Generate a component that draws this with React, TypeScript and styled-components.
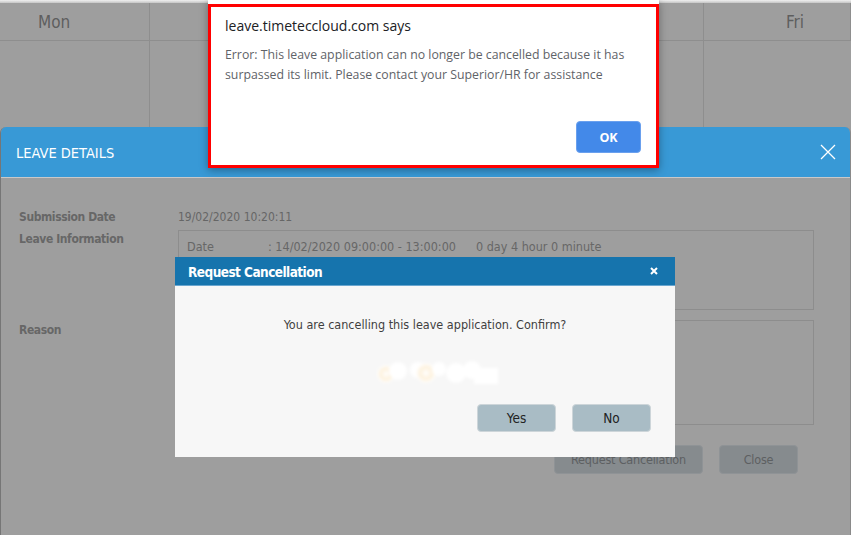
import React from "react";
import styled, { createGlobalStyle } from "styled-components";

const Global = createGlobalStyle`
  html, body { margin: 0; padding: 0; }
  body { background: #9e9e9e; font-family: "DejaVu Sans Condensed", "DejaVu Sans", sans-serif; }
`;

const Page = styled.div`
  position: relative;
  width: 851px;
  height: 535px;
  overflow: hidden;
  background: #9e9e9e;
`;

const TopStrip = styled.div`
  height: 3px;
  background: linear-gradient(#f0f0f0, #c4c4c4);
`;

const Calendar = styled.div`
  display: grid;
  grid-template-columns: 150px 185px 185px 184px 1fr;
  grid-template-rows: 38px 90px;
`;

const DayHead = styled.div<{ $pad: number }>`
  border-right: 1px solid #8e8e8e;
  border-bottom: 1px solid #8e8e8e;
  padding-left: ${(p) => p.$pad}px;
  padding-top: 1px;
  display: flex;
  align-items: center;
  font-size: 17px;
  color: #5e5e5e;
  &:last-child { border-right: none; }
`;

const DayCell = styled.div`
  border-right: 1px solid #8e8e8e;
  &:last-child { border-right: none; }
`;

const Modal = styled.div`
  position: absolute;
  left: 0;
  top: 127px;
  width: 849px;
  height: 420px;
  border-radius: 6px 6px 0 0;
  border-left: 1px solid #767676;
  border-right: 1px solid #8a8a8a;
  background: #9e9e9e;
  overflow: hidden;
  display: flex;
  flex-direction: column;
`;

const ModalHeader = styled.div`
  height: 50px;
  background: #3899d6;
  border-bottom: 1px solid #c9c9c9;
  display: flex;
  align-items: center;
  justify-content: space-between;
  padding: 0 14px 0 15px;
`;

const ModalTitle = styled.div`
  font-size: 14.5px;
  color: #ffffff;
  padding-top: 2px;
`;

const ModalBody = styled.div`
  padding: 30px 36px 0 18px;
  display: grid;
  grid-template-columns: 159px 1fr;
  color: #666;
  font-size: 12px;
`;

const Label = styled.div<{ $mt?: number }>`
  font-weight: bold;
  font-size: 12px;
  letter-spacing: -0.4px;
  color: #676767;
  margin-top: ${(p) => p.$mt ?? 0}px;
  line-height: 18px;
`;

const Value = styled.div`
  color: #666;
  line-height: 18px;
`;

const InfoBox = styled.div<{ $h: number; $mt?: number }>`
  border: 1px solid #8d8d8d;
  height: ${(p) => p.$h}px;
  margin-top: ${(p) => p.$mt ?? 0}px;
  padding: 8px 8px;
  box-sizing: border-box;
  display: flex;
  font-size: 12.5px;
  color: #676767;
`;

const InfoKey = styled.span`width: 81px;`;
const InfoVal = styled.span`width: 208px;`;

const Footer = styled.div`
  display: flex;
  justify-content: flex-end;
  gap: 16px;
  padding: 20px 52px 0 0;
`;

const GhostButton = styled.div<{ $w: number }>`
  width: ${(p) => p.$w}px;
  height: 29px;
  border-radius: 4px;
  background: #868b8e;
  border: 1px solid #8f9396;
  color: #5d6062;
  font-size: 12.5px;
  letter-spacing: -0.2px;
  display: flex;
  align-items: center;
  justify-content: center;
  box-sizing: border-box;
`;

const Dialog = styled.div`
  position: absolute;
  left: 175px;
  top: 257px;
  width: 500px;
  height: 200px;
  background: #f7f7f7;
  display: flex;
  flex-direction: column;
`;

const DialogHeader = styled.div`
  height: 28px;
  background: #1674ad;
  border-bottom: 1px solid #6aa6cf;
  display: flex;
  align-items: center;
  justify-content: space-between;
  padding: 0 17px 0 13px;
`;

const DialogTitle = styled.div`
  font-weight: bold;
  color: #fff;
  font-size: 13.5px;
  letter-spacing: -0.55px;
  padding-top: 2px;
`;

const DialogBody = styled.div`
  flex: 1;
  display: flex;
  flex-direction: column;
  align-items: center;
`;

const Message = styled.div`
  margin-top: 31px;
  font-size: 12.5px;
  color: #3f3f3f;
  line-height: 16px;
`;

const Loader = styled.div`
  margin-top: 24px;
  margin-left: 25px;
  height: 30px;
  width: 124px;
`;

const DialogActions = styled.div`
  align-self: stretch;
  display: flex;
  justify-content: flex-end;
  gap: 16px;
  padding: 17px 24px 0 0;
`;

const DialogButton = styled.div`
  width: 79px;
  height: 28px;
  box-sizing: border-box;
  border-radius: 4px;
  background: #a9bcc5;
  border: 1px solid #cdd5d9;
  color: #222;
  font-size: 13.5px;
  display: flex;
  align-items: center;
  justify-content: center;
`;

const Alert = styled.div`
  position: absolute;
  left: 208px;
  top: 0;
  width: 451px;
  height: 168px;
  background: #fff;
  box-shadow: 0 2px 8px rgba(0, 0, 0, 0.35);
  padding-top: 4px;
  box-sizing: border-box;
  display: flex;
`;

const AlertFrame = styled.div`
  flex: 1;
  border: 3px solid #ff0000;
  padding: 9px 14px 0 14px;
  display: flex;
  flex-direction: column;
`;

const AlertTitle = styled.div`
  font-family: "Open Sans", "Noto Sans", sans-serif;
  font-size: 14px;
  color: #202124;
  line-height: 20px;
`;

const AlertText = styled.div`
  margin-top: 9px;
  font-family: "Open Sans", "Noto Sans", sans-serif;
  font-size: 12.3px;
  line-height: 20px;
  color: #5f6368;
`;

const AlertActions = styled.div`
  margin-top: auto;
  margin-bottom: 12px;
  display: flex;
  justify-content: flex-end;
  padding-right: 1px;
`;

const OkButton = styled.div`
  width: 65px;
  height: 32px;
  border-radius: 4px;
  background: #4389e9;
  border: 1px solid #6aa0ee;
  box-sizing: border-box;
  color: #fff;
  font-family: "Open Sans", "Noto Sans", sans-serif;
  font-weight: bold;
  font-size: 12.5px;
  display: flex;
  align-items: center;
  justify-content: center;
`;

const CloseX = () => (
  <svg width="16" height="16" viewBox="0 0 16 16">
    <path d="M1 1 L15 15 M15 1 L1 15" stroke="#fff" strokeWidth="1.3" fill="none" />
  </svg>
);

const SmallX = () => (
  <svg width="8" height="8" viewBox="0 0 8 8">
    <path d="M1 1 L7 7 M7 1 L1 7" stroke="#fff" strokeWidth="2" fill="none" />
  </svg>
);

const LoaderArt = () => (
  <svg width="124" height="30" viewBox="0 0 124 30">
    <defs>
      <filter id="blur" x="-20%" y="-40%" width="140%" height="180%">
        <feGaussianBlur stdDeviation="1.6" />
      </filter>
      <radialGradient id="warm" cx="0.5" cy="0.5" r="0.5">
        <stop offset="0" stopColor="#ffffff" />
        <stop offset="0.6" stopColor="#fdf1dc" />
        <stop offset="1" stopColor="#ffffff" />
      </radialGradient>
    </defs>
    <g filter="url(#blur)" fill="#ffffff">
      <circle cx="10" cy="17" r="9" fill="url(#warm)" />
      <circle cx="22" cy="14" r="9" />
      <circle cx="42" cy="13" r="8" />
      <circle cx="50" cy="16" r="10" fill="url(#warm)" />
      <circle cx="63" cy="12" r="7" />
      <circle cx="80" cy="16" r="10" />
      <circle cx="96" cy="13" r="9" />
      <rect x="98" y="11" width="24" height="16" />
    </g>
  </svg>
);

export default function App() {
  return (
    <Page>
      <Global />
      <TopStrip />
      <Calendar>
        <DayHead $pad={38}>Mon</DayHead>
        <DayHead $pad={60} />
        <DayHead $pad={60} />
        <DayHead $pad={60} />
        <DayHead $pad={82}>Fri</DayHead>
        <DayCell />
        <DayCell />
        <DayCell />
        <DayCell />
        <DayCell />
      </Calendar>

      <Modal>
        <ModalHeader>
          <ModalTitle>LEAVE DETAILS</ModalTitle>
          <CloseX />
        </ModalHeader>
        <ModalBody>
          <Label>Submission Date</Label>
          <Value>19/02/2020 10:20:11</Value>
          <Label $mt={4}>Leave Information</Label>
          <InfoBox $h={80} $mt={4}>
            <InfoKey>Date</InfoKey>
            <InfoVal>: 14/02/2020 09:00:00 - 13:00:00</InfoVal>
            <span>0 day 4 hour 0 minute</span>
          </InfoBox>
          <Label $mt={11}>Reason</Label>
          <InfoBox $h={105} $mt={10} />
        </ModalBody>
        <Footer>
          <GhostButton $w={149}>Request Cancellation</GhostButton>
          <GhostButton $w={79}>Close</GhostButton>
        </Footer>
      </Modal>

      <Dialog>
        <DialogHeader>
          <DialogTitle>Request Cancellation</DialogTitle>
          <SmallX />
        </DialogHeader>
        <DialogBody>
          <Message>You are cancelling this leave application. Confirm?</Message>
          <Loader>
            <LoaderArt />
          </Loader>
          <DialogActions>
            <DialogButton>Yes</DialogButton>
            <DialogButton>No</DialogButton>
          </DialogActions>
        </DialogBody>
      </Dialog>

      <Alert>
        <AlertFrame>
          <AlertTitle>leave.timeteccloud.com says</AlertTitle>
          <AlertText>
            Error: This leave application can no longer be cancelled because it has
            <br />
            surpassed its limit. Please contact your Superior/HR for assistance
          </AlertText>
          <AlertActions>
            <OkButton>OK</OkButton>
          </AlertActions>
        </AlertFrame>
      </Alert>
    </Page>
  );
}
